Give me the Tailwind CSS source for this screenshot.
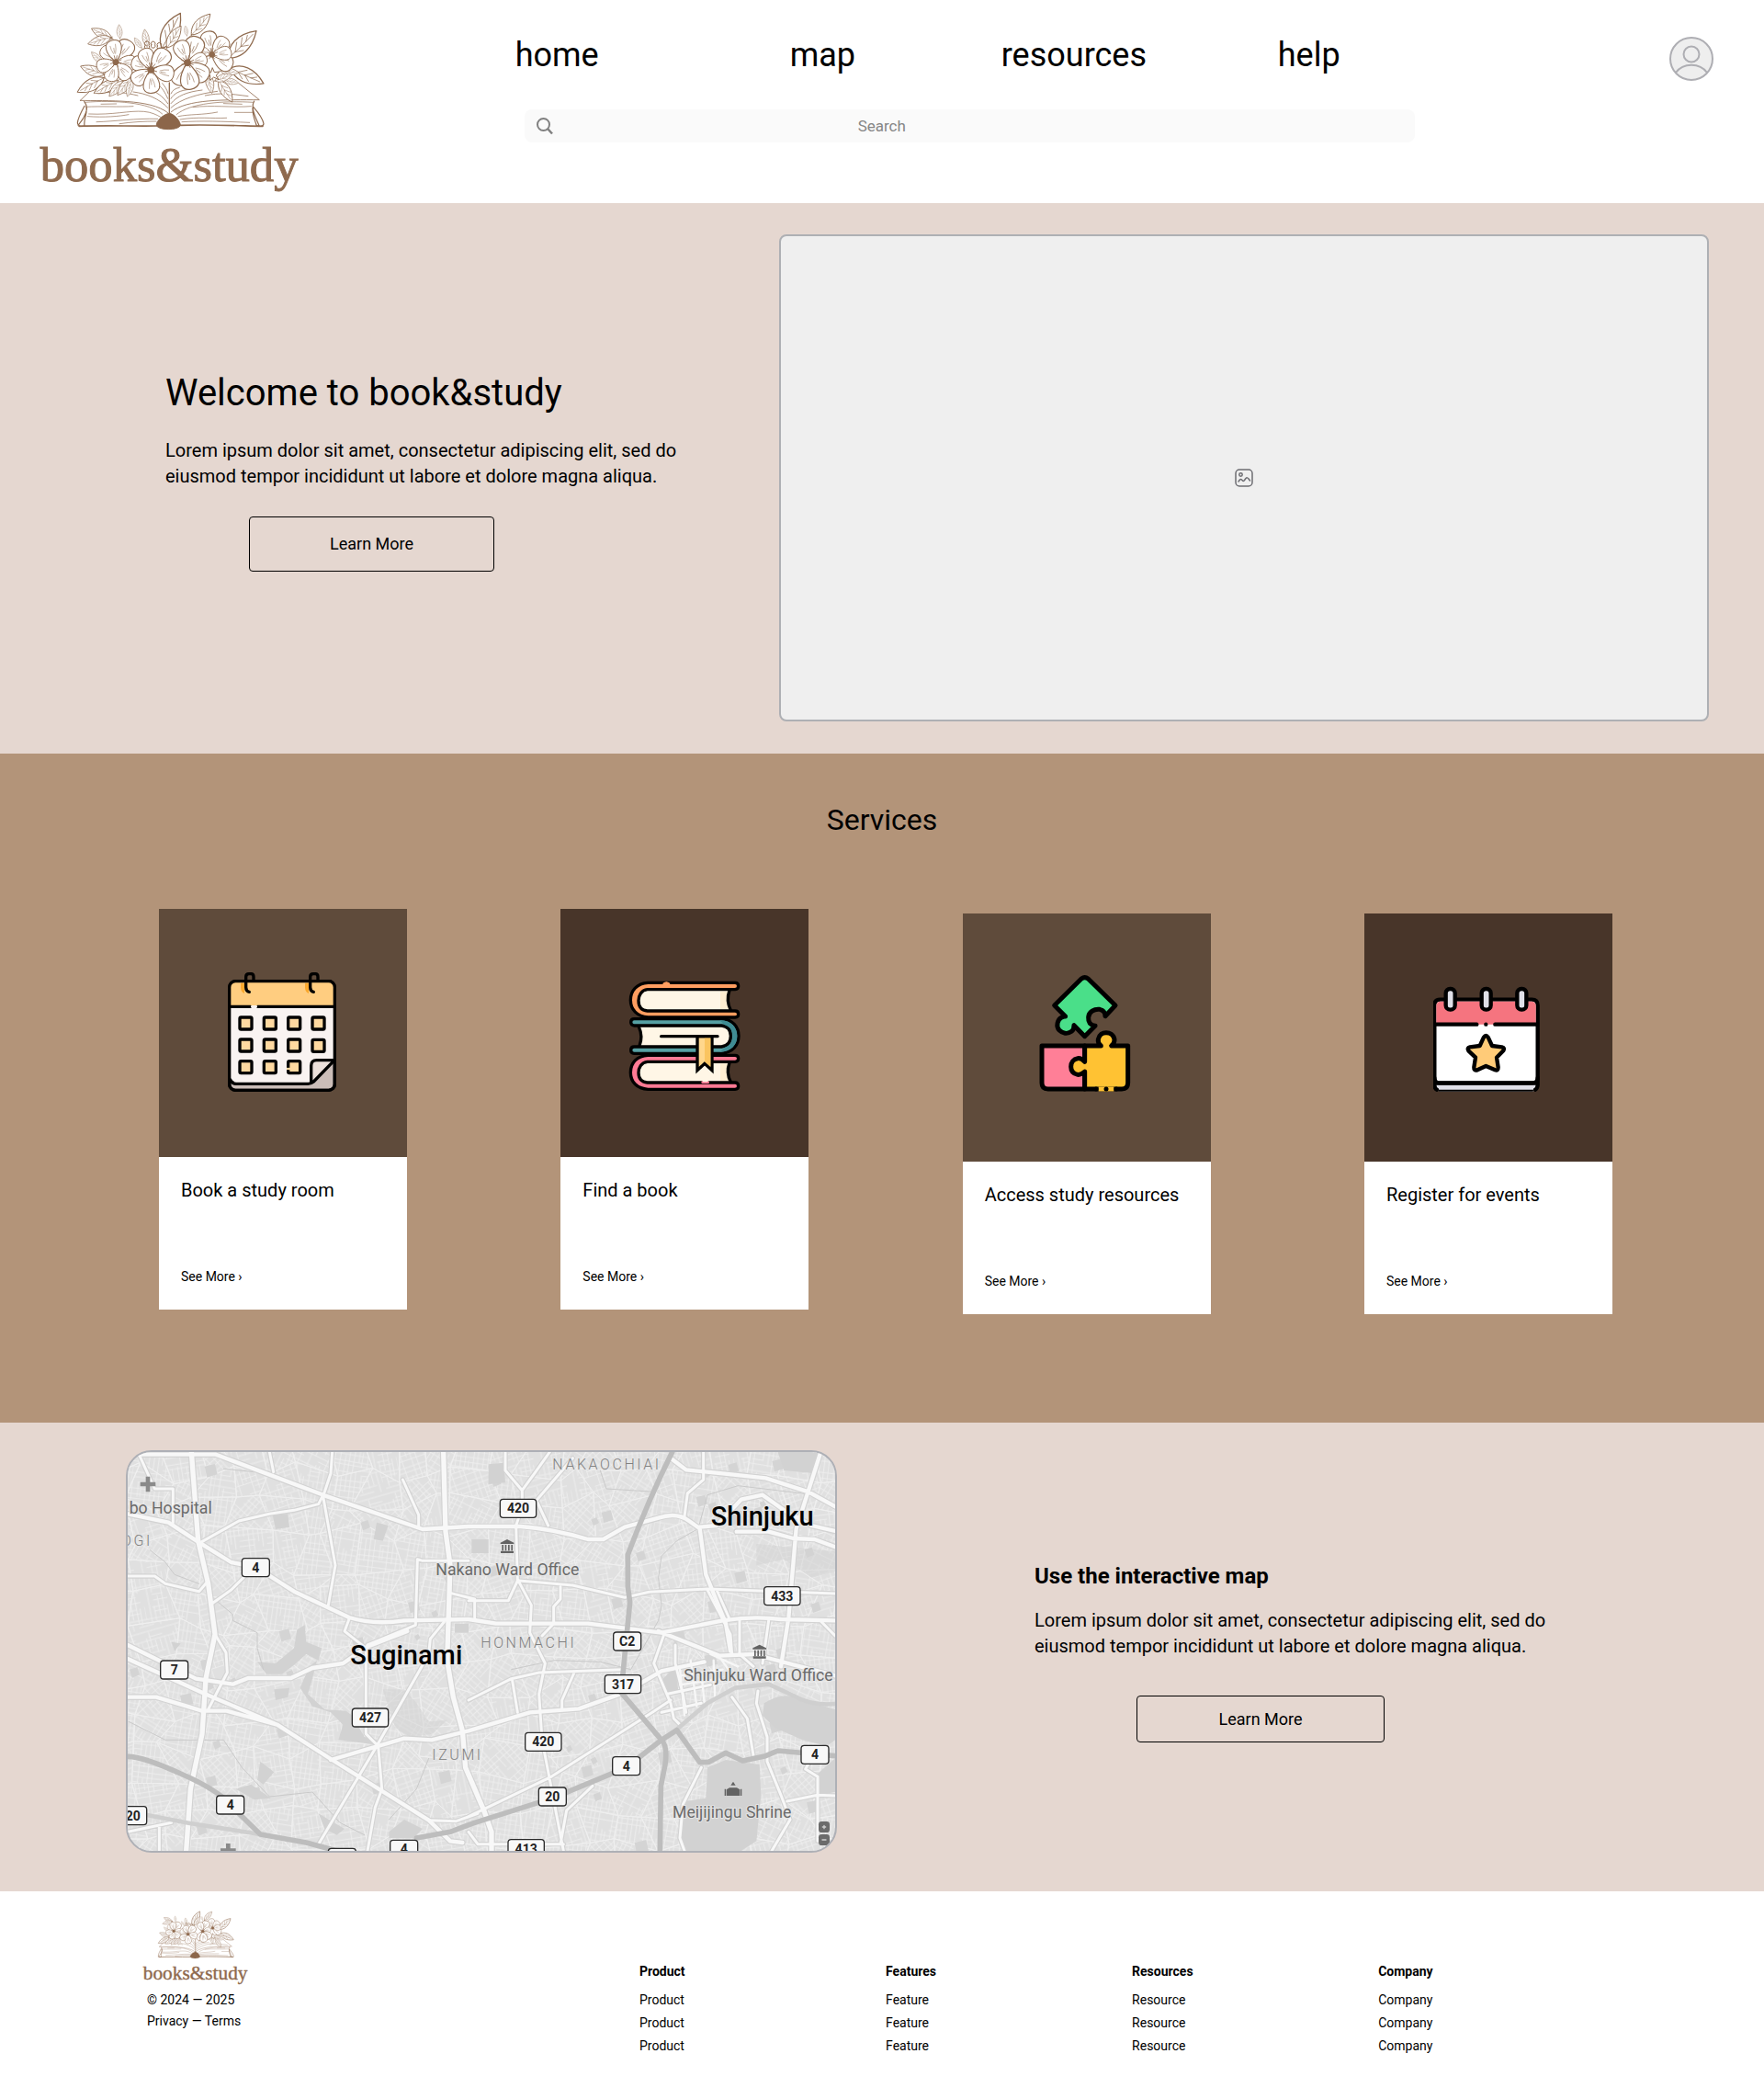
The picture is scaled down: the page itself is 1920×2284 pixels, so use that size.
<!DOCTYPE html>
<html lang="en">
<head>
<meta charset="utf-8">
<title>books&amp;study</title>
<meta name="viewport" content="width=device-width, initial-scale=1">
<script src="https://cdn.jsdelivr.net/npm/@tailwindcss/browser@4"></script>
</head>
<body class="bg-white font-['Roboto',sans-serif] text-black">

<!-- Logo artwork shared by header and footer -->
<svg class="hidden" aria-hidden="true">
  <defs>
    <g id="petal"><path d="M0 0C-12-12-30-38-24-58C-16-76 16-78 24-60C31-42 14-12 0 0Z" fill="#fff"/><path d="M-3-28Q-10-40-11-54M3-28Q8-42 7-58M0-32V-46" stroke-width="1.5"/></g>
    <g id="leaf"><path d="M0 0C-24-22-30-58 0-100C26-60 24-24 0 0Z" fill="#fff"/><path d="M0 8Q3-40 0-88M1-24L-14-44M1-24L13-42M1-44L-13-62M1-44L12-60M1-62L-8-76" stroke-width="1.6"/></g>
    <g id="heart"><circle r="9" fill="#8c664a"/><path d="M0 0L-17-8M0 0L-13-15M0 0L-5-21M0 0L4-21M0 0L12-17M0 0L18-8M0 0L17 5M0 0L-17 5M0 0L-9 14M0 0L8 14" stroke-width="2.4"/></g>
    <symbol id="logo" viewBox="0 0 930 675">
      <g fill="none" stroke="#8f6a4e" stroke-width="3" stroke-linecap="round" stroke-linejoin="round">
        <path d="M240 262L172 328M172 328C260 330 400 322 458 368M690 272L757 326C650 326 520 322 468 366" stroke-width="2.5"/>
        <path d="M463 270V370" stroke-width="4"/>
        <path d="M185 331C200 350 192 368 182 386C176 396 170 402 165 409M186 346C176 364 164 386 163 402C164 412 176 414 186 410C182 390 196 370 192 352M740 330C728 350 742 378 756 410M738 350C752 366 768 388 771 404C770 414 756 414 746 408M735 352C734 376 742 394 748 410" stroke-width="3.5"/>
        <path d="M168 412C250 409 330 412 424 411M498 409C590 406 680 410 768 412" stroke-width="5"/>
        <path d="M188 334C280 326 400 334 440 372M190 349C240 346 300 350 345 347M200 372C280 376 330 360 380 364C404 366 420 374 434 382M196 380C250 384 300 380 330 374M225 398C290 396 350 386 425 388M300 404C340 398 380 396 420 396M240 340L290 339M737 334C640 328 530 336 486 374M540 350C600 342 670 352 730 347M676 367H734M492 380C530 372 570 376 620 366M498 390C560 380 600 388 650 385M504 398C560 394 640 396 725 400M640 338L700 340" stroke-width="2"/>
        <path d="M458 352C430 322 390 306 345 300M458 338C440 312 420 300 400 294M458 322C448 300 440 286 425 276M459 306C455 290 448 282 440 272M468 352C500 322 560 306 620 298M468 338C490 312 520 300 570 294M468 322C478 304 500 294 530 292M468 306C472 296 482 288 496 286M360 312C320 302 290 300 262 302M580 312C630 302 660 306 720 314" stroke-width="2.2"/>
        <path d="M463 370C444 372 418 396 421 410C430 426 490 426 499 410C500 396 480 372 463 370Z" fill="#8c664a"/>
        <use href="#leaf" transform="translate(438 158) rotate(28) scale(1.3)"/>
        <use href="#leaf" transform="translate(455 156) rotate(33) scale(.85)"/>
        <use href="#leaf" transform="translate(535 114) rotate(42) scale(.92)"/>
        <use href="#leaf" transform="translate(520 116) rotate(-8) scale(.32)"/>
        <use href="#leaf" transform="translate(655 190) rotate(46) scale(1.28)"/>
        <use href="#leaf" transform="translate(662 222) rotate(115) scale(1.2)"/>
        <use href="#leaf" transform="translate(390 150) rotate(-8) scale(.55)"/>
        <use href="#leaf" transform="translate(372 156) rotate(-35) scale(.4)"/>
        <path d="M384 148a8 8 0 1 0 12 0a8 8 0 1 0-12 0M404 146a7 7 0 1 0 12 0a7 7 0 1 0-12 0M424 150a7 7 0 1 0 12 0a7 7 0 1 0-12 0"/>
        <use href="#leaf" transform="translate(276 126) rotate(-64) scale(.75)"/>
        <use href="#leaf" transform="translate(272 122) rotate(-106) scale(.78)"/>
        <use href="#leaf" transform="translate(302 125) rotate(-4) scale(.45)"/>
        <use href="#leaf" transform="translate(244 205) rotate(-45) scale(.5)"/>
        <use href="#leaf" transform="translate(250 244) rotate(-70) scale(.82)"/>
        <use href="#leaf" transform="translate(250 254) rotate(-118) scale(.99)"/>
        <use href="#leaf" transform="translate(296 262) rotate(-118) scale(.9)"/>
        <use href="#leaf" transform="translate(312 264) rotate(-138) scale(.68)"/>
        <use href="#leaf" transform="translate(338 254) rotate(-142) scale(.72)"/>
        <use href="#leaf" transform="translate(340 262) rotate(-165) scale(.55)"/>
        <use href="#leaf" transform="translate(588 240) rotate(168) scale(.66)"/>
        <use href="#leaf" transform="translate(624 262) rotate(148) scale(.84)"/>
        <use href="#leaf" transform="translate(640 262) rotate(100) scale(.5)"/>
        <use href="#leaf" transform="translate(630 232) rotate(95) scale(.6)"/>
        <use href="#leaf" transform="translate(612 264) rotate(70) scale(.6)"/>
        <g transform="translate(602 178) scale(.98)">
          <use href="#petal" transform="rotate(-12) scale(1.08)"/><use href="#petal" transform="rotate(42) scale(1)"/><use href="#petal" transform="rotate(122) scale(1.08)"/><use href="#petal" transform="rotate(84) scale(.9)"/><use href="#petal" transform="rotate(-75) scale(.7)"/><use href="#heart"/>
        </g>
        <path d="M604 222L610 236L626 234L616 246L624 260L608 252L596 262L596 246L582 238L598 236Z" fill="#fff"/>
        <g transform="translate(522 205)">
          <use href="#petal" transform="rotate(22) scale(1.25)"/><use href="#petal" transform="rotate(76) scale(.9)"/><use href="#petal" transform="rotate(128) scale(1.15)"/><use href="#petal" transform="rotate(206) scale(1.1)"/><use href="#petal" transform="rotate(172) scale(1.2)"/><use href="#petal" transform="rotate(-22) scale(1.05)"/><use href="#heart" transform="scale(1.1)"/>
        </g>
        <g transform="translate(288 203)">
          <use href="#petal" transform="rotate(-42) scale(.9)"/><use href="#petal" transform="rotate(34) scale(1.15)"/><use href="#petal" transform="rotate(-8) scale(1)"/><use href="#petal" transform="rotate(92) scale(.95)"/><use href="#petal" transform="rotate(140) scale(.95)"/><use href="#petal" transform="rotate(198) scale(.9)"/><use href="#petal" transform="rotate(254) scale(.88)"/><use href="#heart"/>
        </g>
        <g transform="translate(403 228)">
          <use href="#petal" transform="rotate(-64) scale(.95)"/><use href="#petal" transform="rotate(-20) scale(1)"/><use href="#petal" transform="rotate(40) scale(1.15)"/><use href="#petal" transform="rotate(102) scale(1.05)"/><use href="#petal" transform="rotate(236) scale(1)"/><use href="#petal" transform="rotate(178) scale(1.05)"/><use href="#heart" transform="scale(1.1)"/>
        </g>
      </g>
      <text x="41" y="592" font-family="'Liberation Serif',serif" font-size="158" fill="#8f6a4e" stroke="#8f6a4e" stroke-width="3">books&amp;study</text>
    </symbol>
  </defs>
</svg>

<header class="grid h-[221px] grid-cols-[29.2%_51%_1fr]">
  <a href="#" aria-label="books&amp;study" class="block pl-[30px]"><svg class="h-[225px] w-[310px]"><use href="#logo"/></svg></a>
  <div class="pt-9">
    <nav class="grid grid-cols-[299fr_230fr_301fr_149fr] text-4xl leading-12">
      <a href="#">home</a><a href="#">map</a><a href="#">resources</a><a href="#">help</a>
    </nav>
    <form class="relative mt-[35px] ml-2.5">
      <svg class="absolute top-2 left-3 size-5" viewBox="0 0 20 20" fill="none" stroke="#808080" stroke-width="2"><circle cx="8.500" cy="8.500" r="6.500"/><path d="M13 13L18 18.500" stroke-width="2.500"/></svg>
      <input type="search" aria-label="Search" placeholder="Search" class="h-9 w-full rounded-lg bg-[#fafafa] pr-4 pl-[363px] text-[17px] placeholder:text-[#868686]">
    </form>
  </div>
  <a href="#" aria-label="Account" class="mt-10 mr-[55px] justify-self-end">
    <svg class="size-12" viewBox="0 0 48 48" fill="#eee" stroke="#aeaeb3" stroke-width="2"><circle cx="24" cy="24" r="23"/><circle cx="24" cy="19" r="8.500"/><path d="M7 39C15 28 33 28 41 39" fill="none"/></svg>
  </a>
</header>

<main>
<section class="grid grid-cols-[45.6%_1fr] bg-[#e5d7d0] pt-[34px] pr-[60px] pb-[35px]">
  <div class="pt-[149px] pl-[180px]">
    <h1 class="text-[40px] leading-12">Welcome to book&amp;study</h1>
    <p class="mt-6 max-w-[570px] text-xl leading-7">Lorem ipsum dolor sit amet, consectetur adipiscing elit, sed do eiusmod tempor incididunt ut labore et dolore magna aliqua.</p>
    <button class="mt-[30px] ml-[91px] h-[60px] w-[267px] rounded-[4px] border border-black text-lg">Learn More</button>
  </div>
  <div class="flex h-[530px] items-center justify-center rounded-lg border-2 border-[#aeb0b4] bg-[#efefef]">
    <svg class="size-6" viewBox="0 0 24 24" fill="none" stroke="#6d6d72" stroke-width="1.500" stroke-linecap="round" stroke-linejoin="round"><rect x="3" y="3" width="18" height="18" rx="4"/><circle cx="8.500" cy="8.500" r="1.700"/><path d="M6 16L7.500 14Q8.500 13 9.500 14L10.500 15Q11.500 16 12.500 14.500L14 12.500Q15.500 11 17 13L18.500 15"/></svg>
  </div>
</section>

<section class="bg-[#b39479] pt-[52px] pb-[118px]">
  <h2 class="text-center text-[32px] leading-10">Services</h2>
  <div class="mt-[77px] flex items-start justify-between pr-[165px] pl-[173px]">
    <article class="w-[270px] bg-white">
      <div class="flex h-[270px] items-center justify-center bg-[#5f4b3b]">
        <svg class="h-[132px] w-[120px]" viewBox="84 81 360 396" fill="none" stroke="#000" stroke-width="10" stroke-linecap="round" stroke-linejoin="round">
          <rect x="89" y="110" width="344" height="356" rx="20" fill="#cbbdb8"/>
          <path d="M89 190H433V368L362 440Q356 446 346 446H112Q94 446 89 430Z" fill="#f9f3f1" stroke="none"/>
          <path d="M89 190V130Q89 110 109 110H413Q433 110 433 130V190Z" fill="#ffcd80" stroke="none"/>
          <path d="M126 116H138V150Q126 146 126 130ZM336 116H348V150Q336 146 336 130Z" fill="#faa92f" stroke="none"/>
          <rect x="89" y="110" width="344" height="356" rx="20"/>
          <path d="M94 193H158M181 193H430"/><path d="M163 193H176" stroke="#f9f3f1" stroke-width="8"/>
          <path d="M356 440V384Q356 368 372 368H430Z" fill="#ece0db" stroke="none"/>
          <path d="M92 432Q98 445 112 445H346Q356 445 364 438L430 370M356 440V386Q356 368 374 368H430"/>
          <path d="M154 145Q143 143 143 130V96Q143 86 153 86H160Q168 86 168 96V108M364 145Q353 143 353 130V96Q353 86 363 86H370Q378 86 378 96V108"/>
          <g fill="#ffd9a0"><rect x="123" y="228" width="39" height="39" rx="4"/><rect x="202" y="228" width="39" height="39" rx="4"/><rect x="281" y="228" width="39" height="39" rx="4"/><rect x="360" y="228" width="39" height="39" rx="4"/><rect x="123" y="300" width="39" height="39" rx="4"/><rect x="202" y="300" width="39" height="39" rx="4"/><rect x="281" y="300" width="39" height="39" rx="4"/><rect x="360" y="301" width="39" height="39" rx="4"/><rect x="123" y="371" width="39" height="39" rx="4"/><rect x="202" y="371" width="39" height="39" rx="4"/><rect x="281" y="371" width="39" height="39" rx="4"/></g>
          <path d="M276 396H288" stroke="#ffd9a0" stroke-width="7" stroke-linecap="butt"/>
        </svg>
      </div>
      <h3 class="px-6 pt-[22px] text-xl leading-7">Book a study room</h3>
      <a href="#" class="mt-[70px] mb-[26px] block px-6 text-sm leading-5">See More ›</a>
    </article>

    <article class="w-[270px] bg-white">
      <div class="flex h-[270px] items-center justify-center bg-[#483529]">
        <svg class="h-[132px] w-[122px]" viewBox="76 54 366 396" fill="none" stroke="#000" stroke-width="10" stroke-linecap="round" stroke-linejoin="round">
          <g>
            <path d="M138 113H408Q394 146 408 178H138Q110 172 110 146Q110 118 138 113Z" fill="#fff6e6" stroke="none"/>
            <path d="M376 116H406Q394 146 408 176H376Z" fill="#feedd0" stroke="none"/>
            <path d="M406 113Q394 146 410 178"/>
          </g>
          <path d="M424 88H140C104 90 83 114 83 145S104 198 140 201H424Q435 200 435 191Q435 180 424 180H138C116 178 109 162 109 146S118 112 138 110H424Q435 109 435 99Q435 88 424 88Z" fill="#ff9e60"/>
          <path d="M190 91Q200 82 210 91Z" fill="#ff9e60" stroke="#ff9e60" stroke-width="4"/>
          <path d="M110 232H384Q412 236 412 262T384 294H112Q124 262 110 232Z" fill="#fff6e6" stroke="none"/>
          <path d="M110 232Q124 262 112 294"/>
          <path d="M95 206H380C416 208 436 232 436 262S416 316 380 319H95Q84 318 84 308Q84 297 95 297H380C402 294 410 280 410 262S402 230 380 228H95Q84 227 84 217Q84 206 95 206Z" fill="#56a0a3"/>
          <path d="M374 211C412 211 431 234 431 262S412 314 374 314L390 300C408 294 416 280 416 262S408 232 390 226Z" fill="#3f8c93" stroke="none"/>
          <path d="M138 349H408Q394 382 408 412H138Q110 408 110 382Q110 354 138 349Z" fill="#fff6e6" stroke="none"/>
          <path d="M376 352H406Q394 382 408 412H376Z" fill="#feedd0" stroke="none"/>
          <path d="M406 349Q394 382 410 412"/>
          <path d="M424 325H140C104 326 83 350 83 381S104 434 140 436H424Q435 435 435 426Q435 414 424 414H138C116 412 109 398 109 382S118 348 138 346H424Q435 345 435 335Q435 325 424 325Z" fill="#ff7a94"/>
          <path d="M318 413H336" stroke="#ff7a94" stroke-width="8"/><path d="M320 409H334" stroke="#fff6e6" stroke-width="5"/>
          <path d="M301 263V374L325 352L349 374V263Z" fill="#ffd78c" stroke-linejoin="miter"/>
          <path d="M325 268H344V362L325 346Z" fill="#fac45f" stroke="none"/>
          <path d="M183 263H367"/>
        </svg>
      </div>
      <h3 class="px-6 pt-[22px] text-xl leading-7">Find a book</h3>
      <a href="#" class="mt-[70px] mb-[26px] block px-6 text-sm leading-5">See More ›</a>
    </article>

    <article class="mt-[5px] w-[270px] bg-white">
      <div class="flex h-[270px] items-center justify-center bg-[#5f4b3b]">
        <svg class="h-[140px] w-[120px]" viewBox="40 56 360 420" fill="none" stroke="#000" stroke-width="15" stroke-linecap="round" stroke-linejoin="round">
          <path d="M73 293H213V434H93Q73 434 73 414Z" fill="#ff7f97"/>
          <path d="M213 293H266Q255 284 257 272C260 256 272 250 283 250S307 256 310 272Q311 284 300 293H354V414Q354 434 334 434H213V377C203 386 196 388 190 387C176 384 168 374 168 361S176 336 190 334C198 333 206 337 213 345Z" fill="#ffc233"/>
          <path d="M258 434H308" stroke="#ffc233" stroke-linecap="butt"/><path d="M250 434H250M283 434H283M316 434H316"/>
          <path d="M202 74Q213 66 224 74L313 161L280 196Q280 178 262 174C244 172 226 182 225 200C224 218 232 226 247 228L213 262L178 226Q178 240 170 246C156 256 140 252 130 242C118 230 124 206 138 200Q145 196 150 197L114 161Z" fill="#4adf89"/>
        </svg>
      </div>
      <h3 class="px-6 pt-[22px] text-xl leading-7">Access study resources</h3>
      <a href="#" class="mt-[70px] mb-[26px] block px-6 text-sm leading-5">See More ›</a>
    </article>

    <article class="mt-[5px] w-[270px] bg-white">
      <div class="flex h-[270px] items-center justify-center bg-[#483529]">
        <svg class="h-[140px] w-[120px]" viewBox="90 25 360 420" fill="none" stroke="#000" stroke-width="13" stroke-linecap="round" stroke-linejoin="round">
          <path d="M94 380V392Q94 408 112 411H414Q431 408 431 392V380Z" fill="#e0e0e8" stroke="none"/>
          <path d="M94 130Q94 111 113 111H412Q431 111 431 130V366Q431 383 414 383H110Q94 383 94 366Z" fill="#fff"/>
          <path d="M100 192V132Q100 117 115 117H410Q425 117 425 132V192Z" fill="#f5747f" stroke="none"/>
          <path d="M100 192H232M292 192H425M262 192H262"/>
          <path d="M94 366V390Q95 402 102 405M431 366V390Q430 402 423 405M100 384H425"/><path d="M110 408H414" stroke-width="6"/>
          <g fill="#e0e0e8"><rect x="131" y="76" width="30" height="68" rx="14"/><rect x="248" y="76" width="30" height="68" rx="14"/><rect x="364" y="76" width="30" height="68" rx="14"/></g>
          <path d="M255 234Q262 224 269 234L282 262L314 266Q325 269 319 278L297 300L302 332Q302 345 292 341L262 328L234 341Q222 344 223 332L228 300L205 278Q199 269 210 266L242 262Z" fill="#ffcb78"/>
        </svg>
      </div>
      <h3 class="px-6 pt-[22px] text-xl leading-7">Register for events</h3>
      <a href="#" class="mt-[70px] mb-[26px] block px-6 text-sm leading-5">See More ›</a>
    </article>
  </div>
</section>

<section class="flex bg-[#e5d7d0] pt-[30px] pb-[42px] pl-[137px]">
  <div class="h-[438px] w-[774px] shrink-0 overflow-hidden rounded-[28px] border-2 border-[#aeb0b6] bg-[#e0e0e0]">
    <svg class="size-full" viewBox="57 60 2310 1302" preserveAspectRatio="xMidYMid slice" fill="none" stroke-linecap="round" stroke-linejoin="round" role="img" aria-label="Map of Suginami and Shinjuku">
      <g id="streets"></g>
      <g fill="#d2d2d2">
        <path d="M530 265L580 262L585 305L540 312ZM870 290L908 300L890 350L860 345ZM480 745L540 750L600 700L610 640L635 625L640 680L690 700L680 740L640 720L600 755L560 785H510ZM650 760L675 740L660 800L645 850L700 900L770 905L790 920L830 990L870 1000L860 1015L790 1005L745 1000L760 950L720 910L660 890L620 830ZM535 835L585 830L580 860L540 870ZM490 1070L535 1105L500 1145L480 1130ZM410 1160L460 1145L525 1190L470 1195ZM200 680L230 685L210 710ZM1235 100L1285 95L1290 160L1235 165ZM2180 60L2330 60L2300 130L2200 120ZM2135 880Q2200 838 2250 868L2367 900V1000L2340 1020L2260 1000L2170 960L2130 920ZM1950 1090L2010 1065L2120 1080L2125 1180L2110 1330L2060 1362H1870L1860 1290L1880 1200L1945 1190ZM2310 1110L2367 1060V1170L2315 1180ZM1805 800L1845 760L1855 840L1815 850ZM910 1300L960 1260L1020 1290L990 1320H910ZM680 1240L765 1290L740 1310L700 1290ZM1180 345H1235V390H1180ZM1125 620H1170V650H1125Z"/>
        <path d="M890 835H960L1000 880L1040 940L1100 935L1050 980L980 990L930 960ZM2110 360L2367 385V450L2290 470L2200 410L2110 430Z" opacity=".5"/>
      </g>
      <g stroke="#cacaca" stroke-width="3">
        <path d="M130 380L180 420L210 460L290 490M340 540L400 590V610L480 650V700L500 770M60 940L180 1000H370L430 1090L520 1185L660 1170L750 1270L830 1310M1040 1060L1000 1160L910 1260M370 115L470 125M1310 770L1450 740L1600 745L1700 770L1790 610L1800 560L1790 470L1800 400L1850 350L1920 310L1950 200L2050 170L2300 200M1600 120L1620 180L1780 190"/>
      </g>
      <!-- Main roads: shadow casing, then white surface -->
      <g id="roads">
        <g stroke-width="16"><path d="M265 60L287 350L320 490L342 655L312 800L300 980L262 1160L248 1362"/><path d="M1088 60L1095 320L1110 430L1100 740L1120 860L1150 970L1160 1090L1220 1230L1245 1300V1362"/></g>
        <g stroke-width="13"><path d="M57 68H345L700 202L1020 312L1170 303H1340Q1440 310 1560 345H1610L1680 305L1790 275Q1850 255 1890 285L1925 310L1945 460L2010 620L2025 710M57 262L190 290L290 355L395 420L475 435L600 515L780 600Q860 625 960 610L1170 606L1260 620H1560L1800 650L2000 610Q2100 595 2190 606L2367 610M57 690L280 800L400 818L450 798H590L660 765L760 750L840 695L970 645M57 735L310 850L545 950L720 1062L1040 1262L1110 1330L1150 1335M57 860H150L300 905H380L545 950M720 1065L960 995L1050 1000L1170 970L1370 910L1530 898L1680 845L1800 775L1940 745M2320 60L2240 310L2215 600L2190 760M1830 80L1880 118L2000 130L2140 145L2280 190L2367 238M1925 305L1980 300L2060 215L2130 200L2200 250L2290 300L2367 318M2045 320L2150 320L2230 342L2300 345L2367 370M1790 645L1990 725L2100 720L2367 790"/></g>
        <g stroke-width="9"><path d="M95 70L145 180H205V290M57 465H145L180 490L290 515L320 480M335 553L395 510L460 445M295 355L420 285L520 262L600 250L680 230L700 190L720 130L725 60M695 205L735 430L712 560M520 60L533 125M955 150L1007 265V305M1170 415H1020L1003 410L997 625L840 690M780 605L765 645L835 700V980L875 1020L887 1160L865 1220L840 1362M1090 615L1045 670L1040 720L870 1020L680 1340M345 660L378 715L382 780L320 900M1110 520L1190 540V600M1290 60V120L1345 185L1385 130L1435 60M1345 185V240L1325 300L1330 480L1300 545H1170M1390 220L1510 80M1395 225L1430 300M1335 480L1510 495L1680 535L1760 517L1950 507L2367 522M1335 485L1375 560L1370 650L1420 750L1400 850L1410 1000L1480 1362M1470 500V540L1448 565V620L1410 660M1170 870L1310 800L1400 780L1670 770M1312 800L1330 910M1515 780L1475 870V895M1937 60V150L1885 195L1875 270M1950 510L2025 655L2030 720M1980 510L2020 600M2055 610V720L2100 760M2150 610L2130 750M1810 650L1775 750L1830 880L1840 930L1860 950M1845 690V750L1870 850L1880 910M1820 850L1960 820M1800 910L1930 880M1170 1250L1440 1120L1770 910L1830 870M2030 860L2080 930L2100 1050M2115 840L2110 880L2145 990V1070L2190 1180L2220 1260L2160 1362M1930 1090L1870 1210L1860 1320L1875 1362M2210 1200L2310 1180L2367 1182M2310 1330V1120L2270 1095L2290 1060M1040 1262L1130 1265L1200 1240M57 1300L200 1270M160 1280V1362M1575 1150L1490 1230L1470 1340M1170 1300L1200 1340H1480M2320 612L2367 660"/></g>
      </g>
      <g stroke="#f7f7f7" stroke-width="7"><path d="M1860 770L1875 920M1895 740L1915 890M1930 780L1940 880M1970 740L1975 870M1860 790L2000 770M1860 820L1990 800M1990 730L2040 800M1960 720L2050 760"/></g>
      <g stroke="#cfcfcf" stroke-width="14"><path d="M120 1245L260 1272L490 1308M1850 965L1950 880L2040 830L2150 818L2230 855Q2290 890 2367 882"/></g>
      <g stroke="#bdbdbd" stroke-width="17"><path d="M57 1054Q110 1055 230 1110Q370 1170 420 1240L490 1308L640 1335L740 1362M1000 1320L1110 1300L1190 1270L1444 1190L1685 1090L1800 1000L1850 968L1925 1073L1955 1072L2010 1042L2065 1068L2140 1052L2180 1035L2367 1052"/><path d="M1835 60Q1760 210 1690 395V500L1697 550L1668 845L1800 1000Q1820 1020 1812 1080L1798 1150L1795 1362"/></g>
      <g fill="#8a8a8a"><path d="M116 140H130V158H148V172H130V190H116V172H98V158H116ZM378 1338H392V1354H410V1366H360V1354H378Z"/></g>
      <g fill="#636363"><path id="office" d="M1274 356L1296 345L1318 356V360H1274ZM1279 363H1284V382H1279ZM1289 363H1294V382H1289ZM1299 363H1304V382H1299ZM1309 363H1314V382H1309ZM1275 383H1317V390H1275Z"/><use href="#office" x="824" y="344"/><path d="M2026 1148L2034 1136L2042 1148ZM2022 1156H2046L2056 1162V1182H2012V1162ZM2006 1160H2010V1182H2006ZM2058 1160H2062V1182H2058Z"/></g>
      <g font-family="Roboto,sans-serif" fill="#6a6a6a" stroke="#e6e6e6" stroke-width="6" paint-order="stroke">
        <g font-size="53"><text x="62" y="260">bo Hospital</text><text x="1063" y="463">Nakano Ward Office</text><text x="1873" y="807">Shinjuku Ward Office</text><text x="1836" y="1254">Meijijingu Shrine</text></g>
        <g font-size="48" font-weight="300" fill="#808080" class="tracking-[0.16em]"><text x="1444" y="118">NAKAOCHIAI</text><text x="1210" y="698">HONMACHI</text><text x="1051" y="1066">IZUMI</text><text x="36" y="365">OGI</text></g>
        <g font-size="87" font-weight="500" fill="#000"><text x="784" y="752">Suginami</text><text x="1961" y="300">Shinjuku</text></g>
      </g>
      <g fill="#f8f8f8" stroke="#2a2a2a" stroke-width="4">
        <rect x="430" y="407" width="90" height="60" rx="10"/><rect x="164" y="741" width="90" height="60" rx="10"/><rect x="790" y="897" width="118" height="60" rx="10"/><rect x="347" y="1182" width="90" height="60" rx="10"/><rect x="29" y="1217" width="90" height="60" rx="10"/><rect x="914" y="1327" width="90" height="60" rx="10"/><rect x="712" y="1354" width="90" height="60" rx="10"/>
        <rect x="1273" y="214" width="118" height="60" rx="10"/><rect x="2135" y="500" width="118" height="60" rx="10"/><rect x="1643" y="648" width="90" height="60" rx="10"/><rect x="1615" y="788" width="118" height="60" rx="10"/><rect x="1355" y="976" width="118" height="60" rx="10"/><rect x="1640" y="1055" width="90" height="60" rx="10"/><rect x="1399" y="1155" width="90" height="60" rx="10"/><rect x="1299" y="1325" width="118" height="60" rx="10"/><rect x="2256" y="1018" width="90" height="60" rx="10"/>
      </g>
      <g font-family="Roboto,sans-serif" font-size="42" font-weight="700" fill="#222" text-anchor="middle">
        <text x="475" y="452">4</text><text x="209" y="786">7</text><text x="849" y="942">427</text><text x="392" y="1227">4</text><text x="74" y="1262">20</text><text x="959" y="1372">4</text><text x="1332" y="259">420</text><text x="2194" y="545">433</text><text x="1688" y="693">C2</text><text x="1674" y="833">317</text><text x="1414" y="1021">420</text><text x="1685" y="1100">4</text><text x="1444" y="1200">20</text><text x="1358" y="1370">413</text><text x="2301" y="1063">4</text>
      </g>
      <g fill="#6b6b6b"><rect x="2313" y="1266" width="36" height="36" rx="10"/><rect x="2313" y="1308" width="36" height="36" rx="10"/></g>
      <path d="M2326 1284H2336M2331 1279V1289M2325 1326H2337" stroke="#d0d0d0" stroke-width="4"/>
    </svg>
  </div>
  <div class="min-w-0 flex-1 pt-[121px] pl-[215px]">
    <h2 class="text-2xl leading-8 font-bold">Use the interactive map</h2>
    <p class="mt-[18px] max-w-[570px] text-xl leading-7">Lorem ipsum dolor sit amet, consectetur adipiscing elit, sed do eiusmod tempor incididunt ut labore et dolore magna aliqua.</p>
    <button class="mt-10 ml-[111px] h-[51px] w-[270px] rounded-[4px] border border-black text-lg">Learn More</button>
  </div>
</section>
</main>

<footer class="grid grid-cols-[36.25%_1fr] bg-white pb-12 text-sm">
  <div class="pt-4">
    <svg class="ml-[150px] h-[91px] w-[126px]"><use href="#logo"/></svg>
    <p class="ml-40 leading-[23px]">© 2024 — 2025<br><a href="#">Privacy</a> — <a href="#">Terms</a></p>
  </div>
  <div class="grid grid-cols-[repeat(4,21.9%)] pt-[75px] leading-[25px]">
    <div><h3 class="mb-1.5 font-bold">Product</h3><ul><li><a href="#">Product</a></li><li><a href="#">Product</a></li><li><a href="#">Product</a></li></ul></div>
    <div><h3 class="mb-1.5 font-bold">Features</h3><ul><li><a href="#">Feature</a></li><li><a href="#">Feature</a></li><li><a href="#">Feature</a></li></ul></div>
    <div><h3 class="mb-1.5 font-bold">Resources</h3><ul><li><a href="#">Resource</a></li><li><a href="#">Resource</a></li><li><a href="#">Resource</a></li></ul></div>
    <div><h3 class="mb-1.5 font-bold">Company</h3><ul><li><a href="#">Company</a></li><li><a href="#">Company</a></li><li><a href="#">Company</a></li></ul></div>
  </div>
</footer>

<script>
// Minor street texture: irregular city blocks, each with its own street grid angle.
(function () {
  var seed = 7;
  function rnd() { seed = (seed * 16807) % 2147483647; return seed / 2147483647; }
  var cols = 24, rows = 14, pts = [], out = '<defs>';
  for (var p = 0; p < 14; p++) {
    var d = '';
    for (var k = 0; k < 6; k++) {
      var x = Math.round(k * 15 + rnd() * 6), y = Math.round(k * 18 + rnd() * 7);
      d += rnd() < .5 ? 'M' + x + ' 0V108' : 'M' + x + ' ' + Math.round(rnd() * 50) + 'v' + Math.round(30 + rnd() * 40);
      d += rnd() < .6 ? 'M0 ' + y + 'H90' : 'M' + Math.round(rnd() * 40) + ' ' + y + 'h' + Math.round(25 + rnd() * 30);
    }
    out += '<pattern id="blk' + p + '" width="90" height="108" patternUnits="userSpaceOnUse" patternTransform="rotate(' + Math.round(rnd() * 90 - 30) + ')"><path d="' + d + '" stroke="#efefef" stroke-width="2.5"/></pattern>';
  }
  out += '</defs>';
  for (var j = 0; j <= rows; j++) { pts[j] = []; for (var i = 0; i <= cols; i++) pts[j][i] = [Math.round(i * 105 + rnd() * 80 - 60), Math.round(40 + j * 100 + rnd() * 75 - 50)]; }
  for (j = 0; j < rows; j++) for (i = 0; i < cols; i++) {
    out += '<path d="M' + [pts[j][i], pts[j][i + 1], pts[j + 1][i + 1], pts[j + 1][i]].join('L') + 'Z" fill="url(#blk' + Math.floor(rnd() * 14) + ')" stroke="#efefef" stroke-width="3"/>';
  }
  for (i = 0; i < 60; i++) {
    var a = Math.round(rnd() * 2310 + 57), b = Math.round(rnd() * 1300 + 60), w = Math.round(12 + rnd() * 26);
    out += '<path d="M' + a + ' ' + b + 'l' + w + ' -8l8 ' + w + 'l-' + w + ' 10z" fill="#d4d4d4"/>';
  }
  document.getElementById('streets').innerHTML = out;
  // Each main road gets a darker casing under its white surface.
  var roads = document.getElementById('roads'), casing = roads.cloneNode(true);
  casing.removeAttribute('id');
  casing.setAttribute('stroke', '#d3d3d3');
  casing.querySelectorAll('g').forEach(function (g) { g.setAttribute('stroke-width', +g.getAttribute('stroke-width') + 7); });
  roads.setAttribute('stroke', '#f8f8f8');
  roads.parentNode.insertBefore(casing, roads);
})();
</script>
</body>
</html>
